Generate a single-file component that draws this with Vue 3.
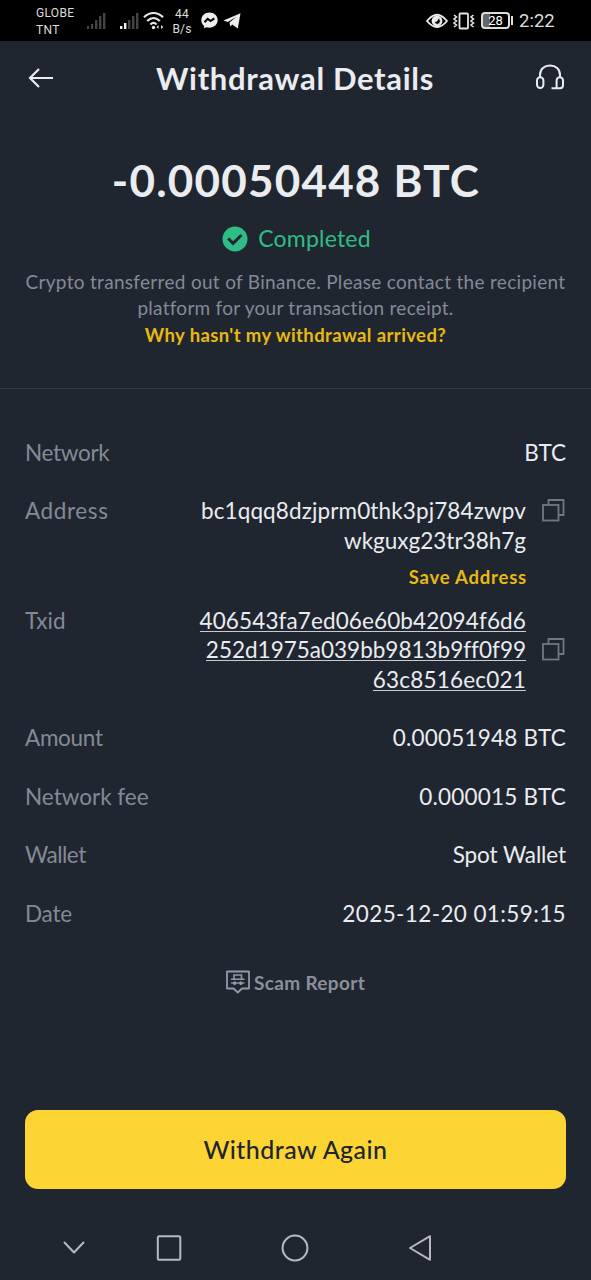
<script setup>
const tail = [
  { label: 'Amount', value: '0.00051948 BTC', cls: 'amt' },
  { label: 'Network fee', value: '0.000015 BTC', cls: 'fee' },
  { label: 'Wallet', value: 'Spot Wallet', cls: 'wal' },
  { label: 'Date', value: '2025-12-20 01:59:15', cls: 'date' },
]
</script>

<template>
  <main class="screen">
    <div class="status">
      <div class="carrier"><span>GLOBE</span><span>TNT</span></div>
      <svg class="sig" width="19" height="18" viewBox="0 0 19 18" fill="#444"><rect y="14" width="2" height="3" /><rect x="4" y="12" width="2.2" height="5" /><rect x="8" y="8" width="2.4" height="9" /><rect x="12" y="4" width="2.4" height="13" /><rect x="16" y="1" width="2.4" height="16" /></svg>
      <svg class="sig two" width="19" height="18" viewBox="0 0 19 18" fill="#444"><g fill="#eee"><rect y="14" width="2.4" height="3" /><rect x="4" y="11" width="2.4" height="6" /></g><rect x="8" y="8" width="2.4" height="9" /><rect x="12" y="4" width="2.4" height="13" /><rect x="16" y="1" width="2.4" height="16" /></svg>
      <svg class="wifi" width="22" height="20" viewBox="0 0 22 20" fill="none" stroke="#e8e8e8" stroke-width="2.1"><path d="M1 6.2C6.5.6 14.5.6 20 6.2M4.2 10c4-3.8 8.6-3.8 12.6 0M7.4 13.4c2-1.9 4.2-1.9 6.2 0" /><circle cx="10.5" cy="16.5" r="1.7" fill="#e8e8e8" stroke="none" /><path d="M15.5 14v4l-2-2zM18 14v4l2.3-2z" fill="#ddd" stroke="none" /></svg>
      <div class="rate"><span>44</span><span>B/s</span></div>
      <svg class="msgr" width="17" height="17" viewBox="0 0 17 17"><path d="M8.5.4C3.8.4.3 3.8.3 8.1c0 2.4 1 4.4 2.8 5.8v2.4l2.4-1c1 .3 2 .4 3 .4 4.7 0 8.2-3.3 8.2-7.6S13.2.4 8.500.4z" fill="#eee" /><path d="M3.500 10.300l3.200-3.400 2.900 2.200 3.700-2.700" fill="none" stroke="#000" stroke-width="2" /></svg>
      <svg class="tg" width="18" height="16" viewBox="0 0 18 16"><path d="M.5 7.500L17.500.3 14.800 15.500 9.300 11.500 7.200 13.600 6.500 9.500 13.500 3.700 4.800 8.900z" fill="#eee" /></svg>
      <svg class="eye" width="22" height="16" viewBox="0 0 22 16"><path d="M1 8Q11-4.500 21 8Q11 20 1 8z" fill="none" stroke="#eee" stroke-width="1.800" /><circle cx="11" cy="8" r="5.400" fill="#eee" /><path d="M12 5a3.200 3.200 0 1 1-4 3.800c2.400.6 4.200-1.600 4-3.800z" fill="#000" stroke="#eee" stroke-width=".8" /></svg>
      <svg class="vib" width="22" height="18" viewBox="0 0 22 18" fill="none" stroke="#e5e5e5"><rect x="6.500" y="1.500" width="8.500" height="15" rx="1" stroke-width="1.800" /><path d="M1 3l2.500 2L1 7l2.500 2L1 11l2.500 2L1 15M20.500 3l-2.500 2 2.500 2-2.500 2 2.500 2-2.500 2 2.500 2" stroke-width="1.600" /></svg>
      <div class="battery"><span>28</span></div>
      <span class="clock">2:22</span>
    </div>

    <header class="header">
      <svg width="26" height="20" viewBox="0 0 26 20" fill="none" stroke="#eaecef" stroke-width="2.200"><path d="M25 10H2M11 1L2 10l9 9" /></svg>
      <h1>Withdrawal Details</h1>
      <svg width="28" height="27" viewBox="0 0 28 27" fill="none" stroke="#eaecef" stroke-width="2"><path d="M4 13.500V11C4 5 8.300 1.500 14 1.500S24 5 24 11v2.500" /><rect x="1" y="13.300" width="6.400" height="10.700" rx="3.200" /><path d="M20.600 24.300V16.500a3.200 3.200 0 0 1 6.400 0v4.500a3.200 3.200 0 0 1-3 3.300h-8.500" /></svg>
    </header>

    <section class="hero">
      <div class="total">-0.00050448 BTC</div>
      <div class="done">
        <svg width="26" height="26" viewBox="0 0 26 26"><circle cx="13" cy="13" r="12.500" fill="#2ebd85" /><path d="M6.200 12.500l4.900 4.800 8.400-8.300" fill="none" stroke="#202630" stroke-width="3" /></svg>
        <span>Completed</span>
      </div>
      <p><span class="d1">Crypto transferred out of Binance. Please contact the recipient</span><span class="d2">platform for your transaction receipt.</span></p>
      <a class="why">Why hasn't my withdrawal arrived?</a>
    </section>

    <section class="details">
      <div class="row"><span class="label l-net">Network</span><span class="value btc">BTC</span></div>
      <div class="row address">
        <span class="label l-addr">Address</span>
        <div class="multi"><span class="a1">bc1qqq8dzjprm0thk3pj784zwpv</span><span class="a2">wkguxg23tr38h7g</span><a class="save">Save Address</a></div>
        <svg class="copy" width="23" height="23" viewBox="0 0 23 23" fill="none" stroke="#717780" stroke-width="1.800"><rect x="1" y="6" width="15.500" height="15.500" /><path d="M6.500 6V1H21.500V16H16.500" /></svg>
      </div>
      <div class="row txid">
        <span class="label l-tx">Txid</span>
        <div class="multi under"><span class="t1">406543fa7ed06e60b42094f6d6</span><span class="t2">252d1975a039bb9813b9ff0f99</span><span class="t3">63c8516ec021</span></div>
        <svg class="copy" width="23" height="23" viewBox="0 0 23 23" fill="none" stroke="#717780" stroke-width="1.800"><rect x="1" y="6" width="15.500" height="15.500" /><path d="M6.500 6V1H21.500V16H16.500" /></svg>
      </div>
      <div v-for="r in tail" :key="r.label" class="row">
        <span class="label" :class="'l-' + r.cls">{{ r.label }}</span><span class="value" :class="r.cls">{{ r.value }}</span>
      </div>
    </section>

    <div class="scam">
      <svg width="24" height="24" viewBox="0 0 24 24" fill="none" stroke="#929aa5" stroke-width="1.800"><path d="M1 1.500H23V18.500H16l-4.200 4-4.200-4H1z" stroke-linejoin="round" /><path d="M8 8.500V5h7.500v3.500M5 9.300H18.500" stroke-width="1.600" /><path d="M5 13h13.500" stroke-width="1.300" /><circle cx="8.700" cy="13.200" r="1.400" fill="#929aa5" stroke-width="1" /><circle cx="14.800" cy="13.200" r="1.400" fill="#929aa5" stroke-width="1" /></svg>
      <span>Scam Report</span>
    </div>

    <button class="again"><span>Withdraw Again</span></button>

    <nav class="nav">
      <svg width="22" height="14" viewBox="0 0 22 14"><path d="M1.500 1.500L11 11.500 20.500 1.500" /></svg>
      <svg class="sq" width="26" height="26" viewBox="0 0 26 26"><rect x="1.800" y="1.300" width="22.500" height="23.400" rx="1.500" /></svg>
      <svg class="ci" width="28" height="28" viewBox="0 0 28 28"><circle cx="14" cy="14" r="12.400" /></svg>
      <svg class="tri" width="24" height="28" viewBox="0 0 24 28"><path d="M22 2.200V25.800L2 14z" /></svg>
    </nav>
  </main>
</template>

<style>
body { background: #202630; }
</style>

<style scoped>
.screen { width: 591px; height: 1280px; display: flex; flex-direction: column; background: #202630; color: #eaecef; font-family: Lato, "Liberation Sans", sans-serif; font-variant-ligatures: none; overflow: hidden; white-space: nowrap; }
svg { display: block; flex: none; }
.status { height: 41px; flex: none; background: #000; display: flex; align-items: center; box-sizing: border-box; padding: 0 35px 0 36px; font-family: Roboto, sans-serif; color: #ddd; }
.carrier, .rate { display: flex; flex-direction: column; font-size: 12px; line-height: 17px; padding-top: 2px; }
.carrier { width: 51px; letter-spacing: .3px; }
.sig.two { margin-left: 14px; }
.wifi { margin-left: 4px; }
.rate { width: 24px; text-align: center; margin-left: 5px; line-height: 15px; letter-spacing: .2px; }
.msgr { margin-left: 7px; }
.tg { margin-left: 5px; }
.eye { margin-left: auto; }
.vib { margin-left: 5px; }
.battery { margin-left: 6px; width: 29px; height: 17px; box-sizing: border-box; border: 2px solid #ddd; border-radius: 4px; background: linear-gradient(90deg, #666 28%, #000 28%); font-size: 13px; line-height: 13px; text-align: center; color: #fff; position: relative; }
.battery::after { content: ""; position: absolute; right: -5px; top: 2px; width: 2px; height: 9px; background: #ddd; }
.clock { margin-left: 9px; font-size: 18.500px; width: 37px; }
.header { height: 73px; flex: none; display: flex; align-items: center; justify-content: space-between; padding: 0 27px 0 28px; }
h1 { margin: 0; font-size: 31px; line-height: 40px; font-weight: 700; letter-spacing: .68px; }
.hero { height: 275px; flex: none; box-sizing: border-box; border-bottom: 1px solid #333b47; display: flex; flex-direction: column; align-items: center; padding-top: 38px; }
.total { font-size: 44px; line-height: 56px; font-weight: 700; letter-spacing: 1.200px; padding-left: 1px; }
.done { display: flex; align-items: center; gap: 10px; margin: 18px 0 0 2px; height: 26px; color: #2ebd85; font-size: 23px; letter-spacing: .2px; }
.done span { margin-top: -2px; }
.hero p { margin: 17px 0 0; display: flex; flex-direction: column; align-items: center; font-size: 19px; line-height: 25.500px; color: #848a94; }
.d1 { letter-spacing: .31px; }
.d2 { letter-spacing: .27px; }
.why { font-size: 18.500px; line-height: 26px; margin-top: 2px; font-weight: 700; letter-spacing: .4px; color: #e9b912; }
.details { padding: 48.600px 25px 0; display: flex; flex-direction: column; gap: 29.200px; font-size: 22.500px; line-height: 29.400px; }
.row { display: flex; justify-content: space-between; }
.label { color: #848a94; }
.l-net, .l-amt { letter-spacing: -.3px; }
.l-addr { letter-spacing: .6px; }
.l-wal { letter-spacing: -.5px; }
.l-date { letter-spacing: -.2px; }
.a1, .t1 { letter-spacing: .12px; }
.t3, .amt, .fee { letter-spacing: .2px; }
.date { letter-spacing: .38px; }
.wal { letter-spacing: -.1px; }
.multi { margin-left: auto; display: flex; flex-direction: column; align-items: flex-end; }
.copy { margin: 2.400px 1px 0 16px; }
.address { margin-bottom: -11.500px; }
.save { font-size: 18.500px; line-height: 22px; font-weight: 700; letter-spacing: .78px; color: #e9b912; margin: 11px -1px 0 0; }
.txid .copy { margin-top: 32px; }
.under span { background: linear-gradient(#c8cbd0, #c8cbd0) 0 25px / 100% 1px no-repeat; }
.scam { display: flex; align-items: center; justify-content: center; gap: 4px; height: 26px; margin-top: 41px; color: #8a9099; font-size: 19px; font-weight: 700; letter-spacing: .35px; }
.again { margin: 114.400px 25px 0; height: 79px; flex: none; border: 0; border-radius: 13px; background: #fcd535; color: #202630; font: 500 25px Lato, sans-serif; letter-spacing: .45px; }
.nav { display: flex; align-items: center; padding-left: 63px; margin-top: 44px; height: 30px; fill: none; stroke: #b7b9bd; stroke-width: 2; stroke-linejoin: round; stroke-linecap: round; }
.sq { margin-left: 71px; }
.ci { margin-left: 99px; }
.tri { margin-left: 99px; }
</style>
